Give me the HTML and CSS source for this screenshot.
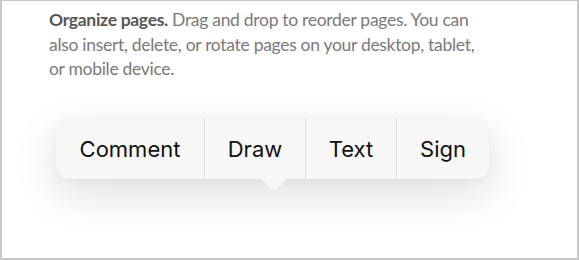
FILE: index.html
```html
<!DOCTYPE html>
<html>
<head>
<meta charset="utf-8">
<link rel="stylesheet" href="styles.css">
</head>
<body>
<div class="frame">
  <p class="intro"><strong>Organize pages.</strong> Drag and drop to reorder pages. You can<br>also insert, delete, or rotate pages on your desktop, tablet,<br>or mobile device.</p>
  <div class="menu-wrap">
    <div class="menu">
      <div class="item item-comment">Comment</div>
      <div class="item item-draw">Draw</div>
      <div class="item item-text">Text</div>
      <div class="item item-sign">Sign</div>
    </div>
    <svg class="arrow" width="26" height="12" viewBox="0 0 26 12"><path d="M0 0 L10.5 10.2 Q13 12.4 15.5 10.2 L26 0 Z" fill="#f7f7f7"/></svg>
  </div>
</div>
</body>
</html>
```
FILE: styles.css
```css
html, body { margin: 0; padding: 0; background: #fff; }
.frame {
  box-sizing: border-box;
  width: 579px;
  height: 260px;
  border: 2px solid #c8c8c8;
  border-top-width: 1px;
  background: #fff;
  overflow: hidden;
}
.intro {
  margin: 7px 0 0 47px;
  font-family: Lato, "Open Sans", sans-serif;
  font-size: 17.5px;
  letter-spacing: -0.3px;
  line-height: 24.5px;
  color: #7a7a7a;
}
.intro strong { color: #575757; font-weight: 700; }
.menu-wrap {
  margin: 37px 0 0 54px;
  width: 433px;
  position: relative;
}
.menu {
  display: flex;
  height: 60px;
  background: #f7f7f7;
  border-radius: 13px;
  box-shadow: 0 14px 44px rgba(0,0,0,0.13), 0 2px 8px rgba(0,0,0,0.04);
  font-family: Inter, Roboto, sans-serif;
  font-size: 22px;
  color: #111;
}
.item {
  display: flex;
  align-items: center;
  justify-content: center;
  border-left: 1px solid #dcdcdc;
}
.item:first-child { border-left: none; }
.item-comment { width: 148px; }
.item-draw { width: 100px; }
.item-text { width: 90px; }
.item-sign { flex: 1; }
.arrow {
  position: absolute;
  left: 205px;
  top: 60px;
  display: block;
}
```
